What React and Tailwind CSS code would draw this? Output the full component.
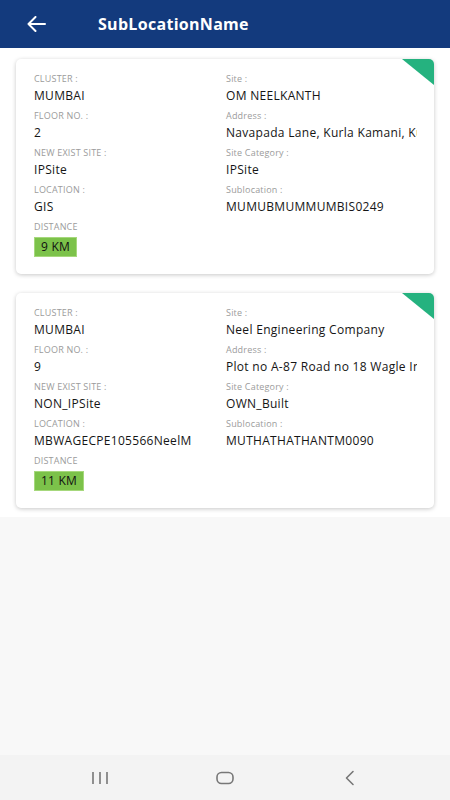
import React from "react";

const cards = [
  {
    left: [
      ["CLUSTER :", "MUMBAI"],
      ["FLOOR NO. :", "2"],
      ["NEW EXIST SITE :", "IPSite"],
      ["LOCATION :", "GIS"],
    ],
    right: [
      ["Site :", "OM NEELKANTH"],
      ["Address :", "Navapada Lane, Kurla Kamani, Kurla West"],
      ["Site Category :", "IPSite"],
      ["Sublocation :", "MUMUBMUMMUMBIS0249"],
    ],
    distance: "9 KM",
  },
  {
    left: [
      ["CLUSTER :", "MUMBAI"],
      ["FLOOR NO. :", "9"],
      ["NEW EXIST SITE :", "NON_IPSite"],
      ["LOCATION :", "MBWAGECPE105566NeelM"],
    ],
    right: [
      ["Site :", "Neel Engineering Company"],
      ["Address :", "Plot no A-87 Road no 18 Wagle Industrial Estate"],
      ["Site Category :", "OWN_Built"],
      ["Sublocation :", "MUTHATHATHANTM0090"],
    ],
    distance: "11 KM",
  },
];

function Field({ label, value }) {
  return (
    <div className="flex flex-col h-[37px] min-w-0">
      <div className="h-[12px] leading-[12px] text-[9px] text-[#9b9b9b] tracking-[0.2px] whitespace-nowrap">
        {label}
      </div>
      <div className="mt-[3px] h-[16px] leading-[16px] text-[12px] text-[#151515] font-medium tracking-[0.3px] whitespace-nowrap overflow-hidden">
        {value}
      </div>
    </div>
  );
}

function Card({ data }) {
  return (
    <div className="relative bg-white rounded-[5px] shadow-[0_1px_4px_rgba(0,0,0,0.22)] overflow-hidden pt-[14px] pb-[17px] pl-[18px] pr-[17px]">
      <div className="absolute top-0 right-0 w-[32px] h-[26px] bg-[#25b27f] [clip-path:polygon(0_0,100%_0,100%_100%)]" />
      <div className="grid grid-cols-[192px_1fr]">
        <div className="flex flex-col min-w-0">
          {data.left.map(([l, v]) => (
            <Field key={l} label={l} value={v} />
          ))}
          <div className="h-[12px] leading-[12px] text-[9px] text-[#9b9b9b] tracking-[0.2px]">
            DISTANCE
          </div>
          <div className="mt-[4px] flex">
            <div className="h-[20px] px-[6px] bg-[#7cc24a] border border-[#a6d87c] flex items-center text-[12px] font-medium text-[#111] tracking-[0.2px]">
              {data.distance}
            </div>
          </div>
        </div>
        <div className="flex flex-col min-w-0">
          {data.right.map(([l, v]) => (
            <Field key={l} label={l} value={v} />
          ))}
        </div>
      </div>
    </div>
  );
}

export default function App() {
  return (
    <div
      className="w-[450px] h-[800px] flex flex-col bg-[#f8f8f8] overflow-hidden"
      style={{ fontFamily: '"Open Sans", "Noto Sans", sans-serif' }}
    >
      <div className="h-[48px] shrink-0 bg-[#133a7d] flex items-center">
        <svg
          className="ml-[27px]"
          width="19"
          height="16"
          viewBox="0 0 19 16"
          fill="none"
          stroke="white"
          strokeWidth="2"
          strokeLinecap="round"
          strokeLinejoin="round"
        >
          <path d="M18 8H1.5M8.5 1L1.5 8l7 7" />
        </svg>
        <div className="ml-[52px] text-white font-bold text-[16px] tracking-[0.3px]">
          SubLocationName
        </div>
      </div>
      <div className="bg-white px-4 pt-[11px] pb-[9px] flex flex-col gap-[19px]">
        {cards.map((c, i) => (
          <Card key={i} data={c} />
        ))}
      </div>
      <div className="flex-1" />
      <div className="h-[45px] shrink-0 bg-[#f3f3f3] flex items-center justify-center gap-[85px]">
        <div className="w-[40px] flex justify-center">
          <svg width="18" height="14" viewBox="0 0 18 14" fill="none" stroke="#777" strokeWidth="1.6">
            <path d="M2 1v12M9 1v12M16 1v12" />
          </svg>
        </div>
        <div className="w-[40px] flex justify-center">
          <svg width="18" height="14" viewBox="0 0 18 14" fill="none" stroke="#777" strokeWidth="1.6">
            <rect x="1" y="1.5" width="16" height="11" rx="4.5" />
          </svg>
        </div>
        <div className="w-[40px] flex justify-center">
          <svg width="12" height="16" viewBox="0 0 12 16" fill="none" stroke="#777" strokeWidth="1.6" strokeLinecap="round" strokeLinejoin="round">
            <path d="M9 1.5L2.5 8 9 14.5" />
          </svg>
        </div>
      </div>
    </div>
  );
}
